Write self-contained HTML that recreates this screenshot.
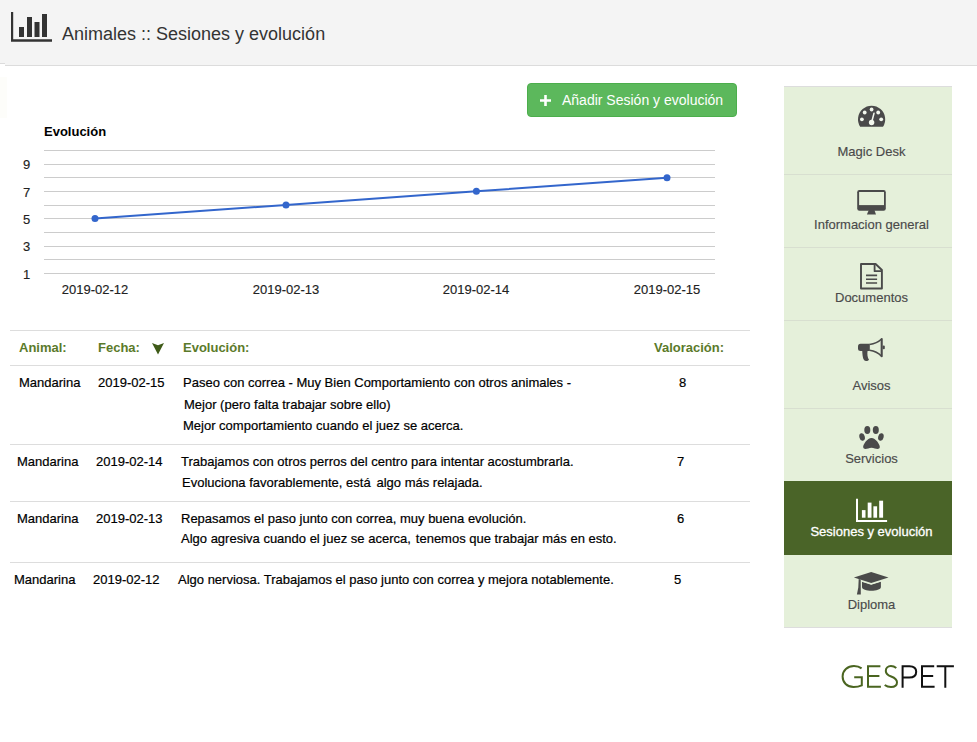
<!DOCTYPE html>
<html lang="es">
<head>
<meta charset="utf-8">
<title>Animales :: Sesiones y evolución</title>
<style>
html,body{margin:0;padding:0;}
body{width:977px;height:742px;background:#fff;position:relative;overflow:hidden;font-family:"Liberation Sans",sans-serif;color:#111;}
.abs{position:absolute;white-space:nowrap;}
#hdr{position:absolute;left:0;top:0;width:977px;height:65px;background:#f4f4f4;border-bottom:1px solid #dcdcdc;}
#title{left:62px;top:23px;font-size:18px;line-height:22px;color:#333;}
#btn{position:absolute;left:527px;top:83px;width:210px;height:34px;background:#5cb85c;border-radius:4px;box-sizing:border-box;border:1px solid #4cae4c;}
#btn span{position:absolute;left:34px;top:8px;font-size:14px;line-height:16px;color:#fff;white-space:nowrap;}
.t{font-size:13px;line-height:16px;color:#000;-webkit-text-stroke:0.2px #000;}
.th{font-size:13px;line-height:16px;color:#5b7a2a;font-weight:bold;}
.hr{position:absolute;left:10px;width:740px;height:1px;background:#ddd;}
#side{position:absolute;left:784px;top:86px;width:168px;height:542px;background:#e5f0da;border-top:1px solid #ddd;border-bottom:1px solid #ddd;box-sizing:border-box;}
.sd{position:absolute;left:784px;width:168px;height:1px;background:#d8dfd0;}
.sl{position:absolute;left:787px;width:169px;text-align:center;font-size:13px;line-height:16px;color:#4a4a4a;-webkit-text-stroke:0.15px #4a4a4a;white-space:nowrap;}
.ax{font-size:13px;line-height:14px;color:#222;-webkit-text-stroke:0.15px #222;}
.axc{width:100px;text-align:center;}
</style>
</head>
<body>
<div id="hdr"></div>
<div class="abs" style="left:0;top:63px;width:5px;height:1px;background:#dcdcdc"></div>
<div class="abs" style="left:0;top:64px;width:5px;height:2px;background:#fff"></div>
<div class="abs" style="left:0;top:77px;width:7px;height:41px;background:#fdfdfa"></div>
<svg class="abs" style="left:11px;top:12px" width="42" height="31" viewBox="0 0 42 31">
  <path d="M1 0V28.5H41" fill="none" stroke="#333" stroke-width="2.4"/>
  <rect x="8" y="15" width="5" height="10" fill="#333"/>
  <rect x="16" y="5" width="5" height="20" fill="#333"/>
  <rect x="23.5" y="10" width="5" height="15" fill="#333"/>
  <rect x="31" y="2" width="5" height="23" fill="#333"/>
</svg>
<div id="title" class="abs">Animales :: Sesiones y evolución</div>

<div id="btn">
  <svg class="abs" style="left:12px;top:11px" width="11" height="11" viewBox="0 0 11 11"><path d="M5.5 0V11M0 5.5H11" stroke="#fff" stroke-width="2.6" fill="none"/></svg>
  <span>Añadir Sesión y evolución</span>
</div>

<!-- chart -->
<div class="abs" style="left:44px;top:124px;font-size:13px;line-height:16px;font-weight:bold;color:#000;">Evolución</div>
<svg class="abs" style="left:0;top:140px" width="760" height="145" viewBox="0 140 760 145">
  <g stroke="#ccc" stroke-width="1" shape-rendering="crispEdges">
    <line x1="44" x2="715" y1="150.5" y2="150.5"/>
    <line x1="44" x2="715" y1="164.5" y2="164.5"/>
    <line x1="44" x2="715" y1="177.5" y2="177.5"/>
    <line x1="44" x2="715" y1="191.5" y2="191.5"/>
    <line x1="44" x2="715" y1="205.5" y2="205.5"/>
    <line x1="44" x2="715" y1="218.5" y2="218.5"/>
    <line x1="44" x2="715" y1="232.5" y2="232.5"/>
    <line x1="44" x2="715" y1="246.5" y2="246.5"/>
    <line x1="44" x2="715" y1="259.5" y2="259.5"/>
    <line x1="44" x2="715" y1="273.5" y2="273.5"/>
  </g>
  <polyline points="95,218.5 286,205 476.4,191.3 667,177.7" fill="none" stroke="#3366cc" stroke-width="2"/>
  <g fill="#3366cc">
    <circle cx="95" cy="218.5" r="3.5"/><circle cx="286" cy="205" r="3.5"/><circle cx="476.4" cy="191.3" r="3.5"/><circle cx="667" cy="177.7" r="3.5"/>
  </g>
</svg>
<div class="abs ax" style="left:23px;top:158px">9</div>
<div class="abs ax" style="left:23px;top:186px">7</div>
<div class="abs ax" style="left:23px;top:213px">5</div>
<div class="abs ax" style="left:23px;top:240px">3</div>
<div class="abs ax" style="left:23px;top:268px">1</div>
<div class="abs ax axc" style="left:45px;top:283px">2019-02-12</div>
<div class="abs ax axc" style="left:236px;top:283px">2019-02-13</div>
<div class="abs ax axc" style="left:426px;top:283px">2019-02-14</div>
<div class="abs ax axc" style="left:617px;top:283px">2019-02-15</div>

<!-- table -->
<div class="hr" style="top:330px"></div>
<div class="abs th" style="left:19px;top:340px">Animal:</div>
<div class="abs th" style="left:98px;top:340px">Fecha:</div>
<svg class="abs" style="left:150px;top:340px" width="16" height="16" viewBox="150 340 16 16"><path d="M152 343.1L158 345.3L164 343.1L158 354.6Z" fill="#3f5b18"/></svg>
<div class="abs th" style="left:183px;top:340px">Evolución:</div>
<div class="abs th" style="left:654px;top:340px">Valoración:</div>
<div class="hr" style="top:365px"></div>

<div class="abs t" style="left:19px;top:375px">Mandarina</div>
<div class="abs t" style="left:98px;top:375px">2019-02-15</div>
<div class="abs t" style="left:183px;top:375px">Paseo con correa - Muy Bien Comportamiento con otros animales -</div>
<div class="abs t" style="left:184px;top:397px">Mejor (pero falta trabajar sobre ello)</div>
<div class="abs t" style="left:183px;top:418px">Mejor comportamiento cuando el juez se acerca.</div>
<div class="abs t" style="left:679px;top:375px">8</div>
<div class="hr" style="top:444px"></div>

<div class="abs t" style="left:17px;top:454px">Mandarina</div>
<div class="abs t" style="left:96px;top:454px">2019-02-14</div>
<div class="abs t" style="left:181px;top:454px">Trabajamos con otros perros del centro para intentar acostumbrarla.</div>
<div class="abs t" style="left:182px;top:475px">Evoluciona favorablemente, está&nbsp; <span style="margin-left:-1.4px">algo más relajada.</span></div>
<div class="abs t" style="left:677px;top:454px">7</div>
<div class="hr" style="top:501px"></div>

<div class="abs t" style="left:17px;top:511px">Mandarina</div>
<div class="abs t" style="left:96px;top:511px">2019-02-13</div>
<div class="abs t" style="left:181px;top:511px">Repasamos el paso junto con correa, muy buena evolución.</div>
<div class="abs t" style="left:181px;top:531px">Algo agresiva cuando el juez se acerca, <span style="margin-left:1.4px">tenemos que trabajar más en esto.</span></div>
<div class="abs t" style="left:677px;top:511px">6</div>
<div class="hr" style="top:562px"></div>

<div class="abs t" style="left:14px;top:572px">Mandarina</div>
<div class="abs t" style="left:93px;top:572px">2019-02-12</div>
<div class="abs t" style="left:178px;top:572px">Algo nerviosa. Trabajamos el paso junto con correa y mejora notablemente.</div>
<div class="abs t" style="left:674px;top:572px">5</div>

<!-- sidebar -->
<div id="side"></div>
<div class="sd" style="top:174px"></div>
<div class="sd" style="top:247px"></div>
<div class="sd" style="top:320px"></div>
<div class="sd" style="top:408px"></div>
<div class="abs" style="left:784px;top:481px;width:168px;height:74px;background:#4a6428;"></div>
<div class="sl" style="top:144px">Magic Desk</div>
<div class="sl" style="top:217px">Informacion general</div>
<div class="sl" style="top:290px">Documentos</div>
<div class="sl" style="top:378px">Avisos</div>
<div class="sl" style="top:451px">Servicios</div>
<div class="sl" style="top:524px;color:#fff;-webkit-text-stroke:0.3px #fff;">Sesiones y evolución</div>
<div class="sl" style="top:597px">Diploma</div>

<svg class="abs" style="left:784px;top:86px" width="168" height="541" viewBox="784 86 168 541">
  <!-- dashboard -->
  <path d="M860.2 126.8A13.6 13.6 0 1 1 883 126.8Z" fill="#4a4a4a"/>
  <g fill="#f3f8ee">
    <circle cx="861.9" cy="119.3" r="1.9"/><circle cx="864.7" cy="112.5" r="1.9"/><circle cx="871.6" cy="109.5" r="1.9"/><circle cx="878.2" cy="112.5" r="1.9"/><circle cx="881.2" cy="119.3" r="1.9"/>
    <circle cx="871.6" cy="122.5" r="2.7"/>
  </g>
  <path d="M871.6 122.5L874 113.3" stroke="#f3f8ee" stroke-width="1.5" stroke-linecap="round"/>
  <!-- monitor -->
  <rect x="857.2" y="190" width="28.6" height="20.7" rx="2.2" fill="#4a4a4a"/>
  <rect x="859.1" y="192" width="24.9" height="13.1" fill="#e5f0da"/>
  <path d="M868.8 210H874.4L876 214.5H866.9Z" fill="#4a4a4a"/>
  <!-- document -->
  <path d="M861 264H875.6L881.9 270V288.5H861Z" fill="none" stroke="#4a4a4a" stroke-width="1.9" stroke-linejoin="round"/>
  <path d="M874.6 264V271.2H881.9" fill="none" stroke="#4a4a4a" stroke-width="1.8" stroke-linejoin="round"/>
  <path d="M866 275.4H877.1M866 279.2H877.1M866 283H877.1" stroke="#4a4a4a" stroke-width="1.6"/>
  <!-- bullhorn -->
  <path d="M860.5 343.7H869.8V350.9H860.5A2.5 2.5 0 0 1 858 348.4V346.2A2.5 2.5 0 0 1 860.5 343.7Z" fill="#4a4a4a"/>
  <path d="M862.2 350.5C862.4 354 862.6 358 864 360.1C865 361.5 868 361.3 869 359.8C867.5 358 867 354 867.6 350.5Z" fill="#4a4a4a"/>
  <path d="M869.6 344.5Q877 343.6 881.3 339.3M869.6 350.2Q877 351.3 881.3 356" fill="none" stroke="#4a4a4a" stroke-width="1.6"/>
  <path d="M881.7 339.1V356.2" stroke="#4a4a4a" stroke-width="2.1" stroke-linecap="round"/>
  <rect x="882.6" y="345.4" width="2.2" height="3.8" rx="1" fill="#4a4a4a"/>
  <!-- paw -->
  <g fill="#4a4a4a">
    <ellipse cx="867.3" cy="430.1" rx="3" ry="4"/>
    <ellipse cx="875.8" cy="430" rx="3" ry="4"/>
    <ellipse cx="862.1" cy="437" rx="2.7" ry="3.8" transform="rotate(-15 862.1 437)"/>
    <ellipse cx="880.9" cy="437" rx="2.7" ry="3.8" transform="rotate(15 880.9 437)"/>
    <path d="M871.5 438C867.5 438 862.8 444.5 863.2 447.3C863.6 450 867.5 448.6 871.5 447.8C875.5 448.6 879.4 450 879.8 447.3C880.2 444.5 875.5 438 871.5 438Z"/>
  </g>
  <!-- bars white -->
  <path d="M857 498.8V521.05H887.1" fill="none" stroke="#fff" stroke-width="2"/>
  <g fill="#fff">
    <rect x="861.9" y="510.1" width="3.6" height="7.6"/>
    <rect x="867.7" y="502.6" width="3.8" height="15.1"/>
    <rect x="873.4" y="506.3" width="3.7" height="11.4"/>
    <rect x="879.2" y="500.7" width="3.9" height="17"/>
  </g>
  <!-- grad cap -->
  <path d="M862 581.5L871.2 584.6L880.9 581.5V587C880.9 589.5 876 590.8 871.4 590.8C866.8 590.8 862 589.5 862 587Z" fill="#4a4a4a"/>
  <path d="M853.9 578.4L871.2 584L888.5 578.4" fill="none" stroke="#e5f0da" stroke-width="1.6"/>
  <path d="M853.9 577.5L871.2 571.9L888.5 577.5L871.2 583Z" fill="#4a4a4a"/>
  <path d="M858.7 579L860.7 579.6L860.8 594.5H856.9L858.3 587.5Z" fill="#4a4a4a"/>
</svg>
<!-- logo -->
<svg class="abs" style="left:830px;top:655px" width="140" height="45" viewBox="0 0 140 45" fill="none" stroke-width="2">
  <g stroke="#4a6520">
    <path d="M31.6 13.4C29.5 11.8 27 11.1 24 11.1C17.5 11.1 12.6 15.6 12.6 21.6C12.6 27.6 17 32 23.6 32C27 32 29.8 31.3 31.8 30.4V22.2H24.2"/>
    <path d="M50.4 11.2H38V31.7H50.9M38 20.9H49.4"/>
    <path d="M66.3 13C64.8 11.8 63 11.1 60.9 11.1C57.8 11.1 55.8 13.2 55.8 15.9C55.8 18.8 57.8 20.2 61.2 21.5C64.9 22.9 67 24.2 67 27.2C67 30 64.7 32 61 32C58.6 32 56.3 31.2 54.7 30"/>
  </g>
  <g stroke="#111">
    <path d="M72.6 32.7V11.2H79.5C83.6 11.2 86.2 13.3 86.2 16.8C86.2 20.5 83.4 22.6 79.2 22.6H72.6"/>
    <path d="M104.2 11.2H92V31.7H104.6M92 20.9H103.2"/>
    <path d="M106.7 11.2H123.9M115.3 11.2V32.7"/>
  </g>
</svg>

</body>
</html>
